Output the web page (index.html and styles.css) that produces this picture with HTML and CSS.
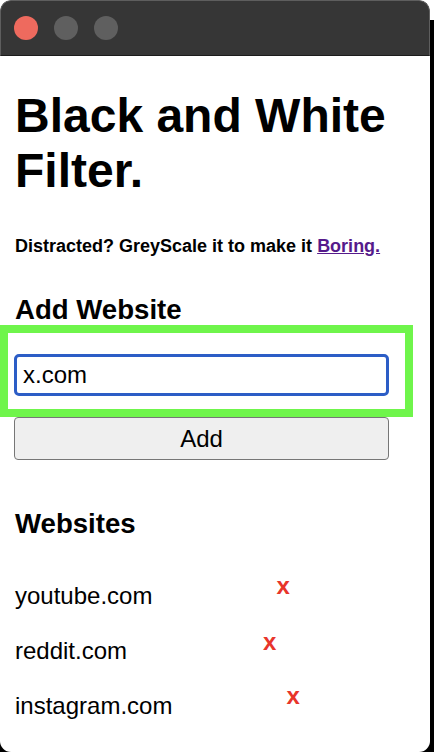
FILE: index.html
```html
<!DOCTYPE html>
<html lang="en">
<head>
<meta charset="utf-8">
<title>Black and White Filter</title>
<link rel="stylesheet" href="styles.css">
</head>
<body>
<div class="screen">
  <div class="window">
    <div class="titlebar">
      <span class="light light-red"></span>
      <span class="light"></span>
      <span class="light"></span>
    </div>
    <main class="content">
      <h1 class="title">Black and White Filter.</h1>
      <p class="tagline">Distracted? GreyScale it to make it <a href="#" class="link">Boring.</a></p>
      <h2 class="section">Add Website</h2>
      <div class="field">
        <input class="url-input" type="text" value="x.com">
        <div class="highlight"></div>
      </div>
      <button class="add-btn" type="button">Add</button>
      <h2 class="section section-list">Websites</h2>
      <ul class="sites">
        <li class="site"><span class="site-name">youtube.com</span><span class="remove">x</span></li>
        <li class="site"><span class="site-name">reddit.com</span><span class="remove">x</span></li>
        <li class="site"><span class="site-name">instagram.com</span><span class="remove">x</span></li>
      </ul>
    </main>
  </div>
</div>
</body>
</html>
```

FILE: styles.css
```css
html, body {
  margin: 0;
  padding: 0;
  background: #000;
}

.screen {
  width: 434px;
  height: 752px;
  background: linear-gradient(#fff 0 20px, #000 20px);
  overflow: hidden;
}

.window {
  width: 430px;
  height: 752px;
  background: #fff;
  border-radius: 11px;
  overflow: hidden;
  font-family: "Liberation Sans", Arial, sans-serif;
  color: #000;
}

.titlebar {
  height: 56px;
  box-sizing: border-box;
  background: #363636;
  border: 1px solid #5e5e5e;
  border-bottom: 1px solid #1c1c1c;
  border-radius: 11px 11px 0 0;
  display: flex;
  align-items: center;
  gap: 16px;
  padding-left: 13px;
}

.light {
  width: 24px;
  height: 24px;
  border-radius: 50%;
  background: #5f5f5f;
}

.light-red {
  background: #ee6a5e;
}

.content {
  padding: 0 15px;
}

.title {
  margin: 32px 0 0;
  font-size: 48px;
  line-height: 55px;
  font-weight: bold;
}

.tagline {
  margin: 37px 0 0;
  font-size: 18px;
  line-height: 22px;
  font-weight: bold;
}

.link {
  color: #551a8b;
  text-decoration: underline;
}

.section {
  margin: 37px 0 0;
  font-size: 27.6px;
  line-height: 32px;
  font-weight: bold;
}

.field {
  position: relative;
  margin-top: 28px;
  margin-left: -1px;
}

.url-input {
  display: block;
  box-sizing: border-box;
  width: 375px;
  height: 42px;
  margin: 0;
  padding: 0 6px;
  border: 3px solid #2c5dc6;
  border-radius: 5px;
  font-family: "Liberation Sans", Arial, sans-serif;
  font-size: 24px;
  color: #000;
  background: #fff;
  outline: none;
}

.highlight {
  position: absolute;
  left: -14px;
  top: -29px;
  width: 413px;
  height: 92px;
  box-sizing: border-box;
  border: 8px solid #6ff54b;
  pointer-events: none;
}

.add-btn {
  display: block;
  box-sizing: border-box;
  width: 375px;
  height: 43px;
  margin: 21px 0 0 -1px;
  padding: 0;
  background: #efefef;
  border: 1.5px solid #767676;
  border-radius: 4px;
  font-family: "Liberation Sans", Arial, sans-serif;
  font-size: 24px;
  color: #000;
}

.section-list {
  margin-top: 48px;
}

.sites {
  list-style: none;
  margin: 42px 0 0;
  padding: 0;
  display: flex;
  flex-direction: column;
  gap: 27px;
}

.site {
  font-size: 24px;
  line-height: 28px;
  display: flex;
  align-items: baseline;
}

.remove {
  color: #e8352b;
  font-weight: bold;
  font-size: 24px;
  position: relative;
  top: -10px;
}

.site:nth-child(1) .remove { margin-left: 124px; }
.site:nth-child(2) .remove { margin-left: 136px; top: -9px; }
.site:nth-child(3) .remove { margin-left: 114px; }
```
